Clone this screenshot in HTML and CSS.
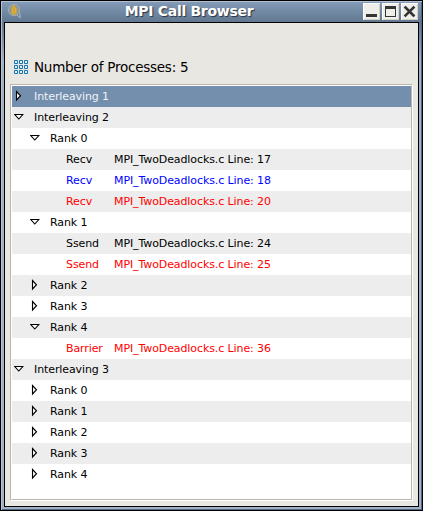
FILE: index.html
```html
<!DOCTYPE html>
<html lang="en">
<head>
<meta charset="utf-8">
<title>MPI Call Browser</title>
<link rel="stylesheet" href="styles.css">
</head>
<body>
<svg class="defs" width="0" height="0">
  <symbol id="closed" viewBox="0 0 10 13"><path d="M2.5 1.500v8.500l4-4.250z" fill="#fff" stroke="#000" stroke-width="1.1"/></symbol>
  <symbol id="open" viewBox="0 0 10 13"><path d="M.8 3.500h8L4.800 8z" fill="#fff" stroke="#000" stroke-width="1.1"/></symbol>
</svg>
<div class="window">
  <header class="titlebar">
    <svg class="app-icon" width="16" height="17" viewBox="0 0 16 17">
      <circle cx="7" cy="7" r="5.7" fill="#8997a5" stroke="#a3adb6" stroke-width=".9"/>
      <path d="M4.500 4.500L6 2h2l.5 2 1.500 1v5L8 12H6l-2-2z" fill="#c9a23c"/>
      <path d="M6 3v8M8.500 5v5" stroke="#dfb431" stroke-width="1"/>
      <path d="M10 12l3.500 3M13 10v5" stroke="#b1b5b6" stroke-width="1"/>
    </svg>
    <h1 class="title">MPI Call Browser</h1>
    <div class="buttons">
      <button class="btn" aria-label="Minimize"><svg width="17" height="17"><path d="M3 11h11v3H3z" fill="#333533"/></svg></button>
      <button class="btn" aria-label="Maximize"><svg width="17" height="17"><path d="M3 3h11v11H3zM4 6v7h9V6z" fill="#333533" fill-rule="evenodd"/></svg></button>
      <button class="btn" aria-label="Close"><svg width="17" height="17"><path d="M4.500 4.500l8 8M12.500 4.500l-8 8" stroke="#333533" stroke-width="2.6" stroke-linecap="square"/></svg></button>
    </div>
  </header>
  <main class="content">
    <div class="summary">
      <svg width="14" height="14" viewBox="0 0 14 14" fill="#e5f3fa" stroke="#1574ad" stroke-width="1">
        <path d="M.5.5h3v3h-3zM5.5.5h3v3h-3zM10.5.5h3v3h-3zM.5 5.5h3v3h-3zM5.5 5.5h3v3h-3zM10.5 5.5h3v3h-3zM.5 10.5h3v3h-3zM5.5 10.5h3v3h-3zM10.5 10.5h3v3h-3z"/>
      </svg>
      <span>Number of Processes: 5</span>
    </div>
    <div class="tree">
      <div class="rows">
        <div class="row selected"><svg class="arrow"><use href="#closed"/></svg>Interleaving 1</div>
        <div class="row"><svg class="arrow"><use href="#open"/></svg>Interleaving 2</div>
        <div class="row rank"><svg class="arrow"><use href="#open"/></svg>Rank 0</div>
        <div class="row call"><span class="op">Recv</span>MPI_TwoDeadlocks.c Line: 17</div>
        <div class="row call blue"><span class="op">Recv</span>MPI_TwoDeadlocks.c Line: 18</div>
        <div class="row call red"><span class="op">Recv</span>MPI_TwoDeadlocks.c Line: 20</div>
        <div class="row rank"><svg class="arrow"><use href="#open"/></svg>Rank 1</div>
        <div class="row call"><span class="op">Ssend</span>MPI_TwoDeadlocks.c Line: 24</div>
        <div class="row call red"><span class="op">Ssend</span>MPI_TwoDeadlocks.c Line: 25</div>
        <div class="row rank"><svg class="arrow"><use href="#closed"/></svg>Rank 2</div>
        <div class="row rank"><svg class="arrow"><use href="#closed"/></svg>Rank 3</div>
        <div class="row rank"><svg class="arrow"><use href="#open"/></svg>Rank 4</div>
        <div class="row call red"><span class="op">Barrier</span>MPI_TwoDeadlocks.c Line: 36</div>
        <div class="row"><svg class="arrow"><use href="#open"/></svg>Interleaving 3</div>
        <div class="row rank"><svg class="arrow"><use href="#closed"/></svg>Rank 0</div>
        <div class="row rank"><svg class="arrow"><use href="#closed"/></svg>Rank 1</div>
        <div class="row rank"><svg class="arrow"><use href="#closed"/></svg>Rank 2</div>
        <div class="row rank"><svg class="arrow"><use href="#closed"/></svg>Rank 3</div>
        <div class="row rank"><svg class="arrow"><use href="#closed"/></svg>Rank 4</div>
      </div>
    </div>
  </main>
</div>
</body>
</html>
```
FILE: styles.css
```css
* { box-sizing: border-box; }
body {
  margin: 0;
  font-family: "DejaVu Sans", sans-serif;
  font-size: 11px;
  color: #000;
  overflow: hidden;
}
.defs { position: absolute; }
.window {
  width: 423px;
  height: 511px;
  border: 1px solid #000;
  padding: 0 3px 3px;
  display: flex;
  flex-direction: column;
  background: linear-gradient(#849cb8 0, #60768f 22px, #a2b1c8 60px);
  box-shadow: inset 1px 1px #b4c0d2, inset -1px -1px #52677f;
}
.titlebar {
  height: 21px;
  display: flex;
  align-items: flex-start;
  padding: 2px 1px 0 3px;
}
.app-icon { display: block; flex: none; }
.title {
  flex: 1;
  margin: 0 8px 0 0;
  font-size: 14px;
  letter-spacing: -0.3px;
  line-height: 17px;
  text-align: center;
  color: #fff;
  text-shadow: 1px 1px 1px #283442;
}
.buttons { display: flex; gap: 2px; }
.btn {
  width: 17px;
  height: 17px;
  padding: 0;
  border: 0;
  background: #eeeeea;
  box-shadow: inset 1px 1px #fff, inset -1px -1px #d5d1c7;
}
.btn svg { display: block; }
.content {
  flex: 1;
  border: 1px solid #000;
  background: #e9e7e2;
  padding: 36px 5px 5px;
}
.summary {
  display: flex;
  align-items: center;
  gap: 6px;
  height: 16px;
  margin: 0 0 9px 4px;
  font-size: 13.5px;
  letter-spacing: -0.25px;
  white-space: nowrap;
}
.tree {
  height: 417px;
  border: 1px solid;
  border-color: #b9b7ad #fff #fff #b9b7ad;
}
.rows {
  height: 415px;
  border: 1px solid;
  border-color: #fff #b9b7ad #b9b7ad #fff;
  background: #fff;
}
.row {
  height: 21px;
  display: flex;
  align-items: center;
  padding-left: 2px;
  letter-spacing: -0.1px;
  white-space: pre;
}
.row:nth-child(even) { background: #ededed; }
.row.selected { background: #748fae; color: #eff3f6; }
.row.rank { padding-left: 18px; }
.row.call { padding-left: 54px; }
.arrow { width: 10px; height: 13px; margin-right: 10px; }
.op { width: 48px; }
.blue { color: #00f; }
.red { color: #f00; }
```
